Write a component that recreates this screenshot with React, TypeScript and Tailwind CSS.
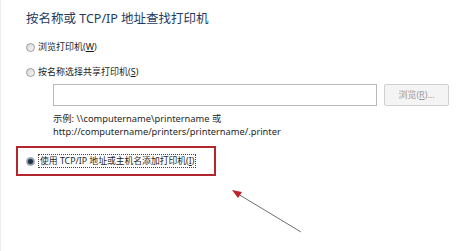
import React from "react";

function Radio({ checked = false }: { checked?: boolean }) {
  return (
    <span className="relative flex h-[9px] w-[9px] shrink-0 items-center justify-center rounded-full border border-[#9c9c9c] bg-gradient-to-br from-[#d8d8d8] to-[#f6f6f6]">
      {checked && <span className="h-[5px] w-[5px] rounded-full bg-[#233247] ring-1 ring-[#7d95ad]" />}
    </span>
  );
}

export default function App() {
  return (
    <div
      className="relative h-[251px] w-[464px] overflow-hidden border-l border-[#ededed] bg-white pt-[11px] text-[#1c1c1c]"
      style={{ fontFamily: '"Noto Sans", "Noto Sans CJK SC", sans-serif' }}
    >
      <div className="h-[16px] pl-[25px] text-[12.5px] leading-[16px] text-[#233a63]">
        按名称或 TCP/IP 地址查找打印机
      </div>

      <div className="mt-[13px] flex h-[14px] items-center gap-[3px] pl-[25px] text-[9px] leading-[14px]">
        <Radio />
        <span>
          浏览打印机(<span className="underline">W</span>)
        </span>
      </div>

      <div className="mt-[11px] flex h-[14px] items-center gap-[3px] pl-[25px] text-[9px] leading-[14px]">
        <Radio />
        <span>
          按名称选择共享打印机(<span className="underline">S</span>)
        </span>
      </div>

      <div className="mt-[5px] flex gap-[7px] pl-[52px]">
        <div className="h-[22px] w-[324px] border border-[#b9b9b9] bg-white" />
        <div className="flex h-[22px] w-[65px] items-center justify-center rounded-[2px] border border-[#cfcfcf] bg-[#f4f4f4] text-[9px] text-[#9a9a9a]">
          浏览(<span className="underline">R</span>)...
        </div>
      </div>

      <div className="mt-[6px] pl-[52px] text-[9.3px] leading-[13px] text-[#262626]">
        <div>示例: \\computername\printername 或</div>
        <div>http://computername/printers/printername/.printer</div>
      </div>

      <div className="ml-[15px] mt-[8px] flex h-[30px] w-[200px] items-center border-2 border-[#b3262e] pl-[8px]">
        <Radio checked />
        <span className="ml-[3px] border border-dotted border-[#444] px-[1px] text-[8.8px] leading-[12px]">
          使用 TCP/IP 地址或主机名添加打印机(<span className="underline">I</span>)
        </span>
      </div>

      <svg className="absolute left-0 top-0" width="464" height="251" viewBox="0 0 464 251">
        <line x1="300" y1="232" x2="237" y2="194" stroke="#6e6e6e" strokeWidth="1" />
        <polygon points="231,190 241,192 237,198" fill="#c0222b" />
      </svg>
    </div>
  );
}
